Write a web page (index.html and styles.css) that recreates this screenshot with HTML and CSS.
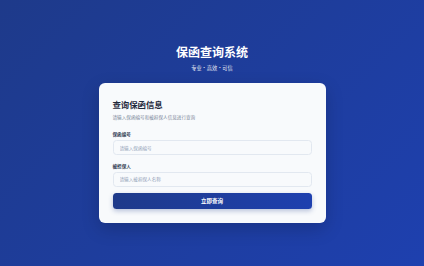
FILE: index.html
```html
<!DOCTYPE html>
<html lang="zh-CN">
<head>
  <meta charset="UTF-8" />
  <meta name="viewport" content="width=device-width, initial-scale=1" />
  <title>保函查询系统</title>
  <link rel="stylesheet" href="styles.css">
</head>
<body>
  <div class="page">
    <div class="header">
      <h1>保函查询系统</h1>
      <p>专业·高效·可信</p>
    </div>

    <div class="card">
      <h2>查询保函信息</h2>
      <p class="desc">请输入保函编号和被担保人信息进行查询</p>

      <form id="queryForm">
        <label class="first">保函编号</label>
        <input type="text" name="guarantee_no" placeholder="请输入保函编号" />

        <label>被担保人</label>
        <input type="text" name="guarantee_party" placeholder="请输入被担保人名称" />

        <button type="submit">立即查询</button>
      </form>
    </div>
  </div>
</body>
</html>
```

FILE: styles.css
```css
* {
  box-sizing: border-box;
}

html, body {
  margin: 0;
  height: 100%;
}

body {
  font-family: "Noto Sans CJK SC", "Noto Sans", sans-serif;
  background: linear-gradient(135deg, #1e3a8a 0%, #1e40af 100%);
  color: #1e293b;
}

.page {
  padding-top: 45px;
  display: flex;
  flex-direction: column;
  align-items: center;
}

.header {
  text-align: center;
  color: #fff;
}

.header h1 {
  margin: 0;
  font-size: 12px;
  line-height: 14px;
  font-weight: 700;
}

.header p {
  margin: 5px 0 0;
  font-size: 5.2px;
  line-height: 8px;
  opacity: 0.9;
}

.card {
  width: 227px;
  margin-top: 11px;
  background: #f8fafc;
  border-radius: 6px;
  padding: 15px 14px 14px;
  box-shadow: 0 6px 18px rgba(0, 0, 0, 0.18);
}

.card h2 {
  margin: 0;
  font-size: 8.4px;
  line-height: 12px;
  font-weight: 700;
  color: #1e293b;
}

.desc {
  margin: 3.5px 0 0;
  font-size: 4.6px;
  line-height: 6px;
  color: #7b8799;
}

label {
  display: block;
  margin-top: 8px;
  margin-bottom: 2.5px;
  font-size: 4.6px;
  line-height: 6px;
  font-weight: 700;
  color: #334155;
}

label.first {
  margin-top: 11.5px;
  margin-bottom: 3px;
}

input {
  display: block;
  width: 100%;
  height: 15px;
  padding: 0 6px;
  border: 0.6px solid #e2e8f0;
  border-radius: 3.5px;
  background: #f8fafc;
  font-family: inherit;
  font-size: 4.6px;
  color: #334155;
  outline: none;
}

input::placeholder {
  color: #94a3b8;
}

button {
  display: block;
  width: 100%;
  height: 16px;
  margin-top: 6px;
  border: none;
  border-radius: 3.5px;
  background: linear-gradient(90deg, #1e3a8a, #1e40af);
  color: #fff;
  font-family: inherit;
  font-size: 5.5px;
  font-weight: 700;
  cursor: pointer;
  box-shadow: 0 2px 5px rgba(30, 58, 138, 0.3);
}

button:hover {
  background: #1e3a8a;
}
```
